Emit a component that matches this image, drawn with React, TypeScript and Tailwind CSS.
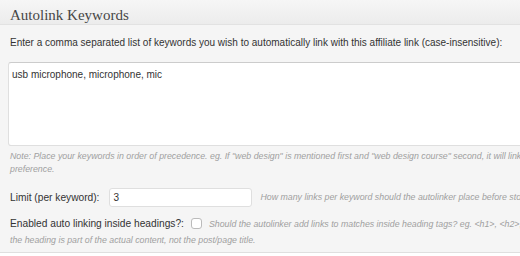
export default function App() {
  return (
    <div className="w-[520px] h-[256px] overflow-hidden bg-white font-['Liberation_Sans',Arial,sans-serif] text-[#333]">
      <div className="w-[640px] border-b border-[#dfdfdf] bg-[#f5f5f5]">
        {/* Header */}
        <div className="h-[25px] border-b border-[#e2e2e2] bg-gradient-to-b from-[#f6f6f6] to-[#ececec] px-[10px] pt-[4px]">
          <h3 className="font-['Liberation_Serif',serif] text-[15px] text-[#464646]">Autolink Keywords</h3>
        </div>

        <div className="px-[10px] pt-[11px] pb-[4px]">
          <p className="whitespace-nowrap text-[10px] leading-[14px]">
            Enter a comma separated list of keywords you wish to automatically link with this affiliate link (case-insensitive):
          </p>

          <textarea
            defaultValue="usb microphone, microphone, mic"
            className="mt-[12px] -ml-[2px] block h-[84px] w-full resize-none rounded-[3px] border border-[#dfdfdf] border-t-[#ccc] bg-white px-[3px] py-[5px] text-[10px] leading-[14px] text-[#333] outline-none"
          />

          <p className="mt-[4px] whitespace-nowrap text-[8.8px] italic leading-[13px] text-[#a0a0a0]">
            Note: Place your keywords in order of precedence. eg. If "web design" is mentioned first and "web design course" second, it will link "web design" with a higher
            <br />
            preference.
          </p>

          <div className="mt-[12px] flex items-center gap-[10px]">
            <span className="text-[10.2px]">Limit (per keyword):</span>
            <input
              defaultValue="3"
              className="h-[19px] w-[143px] rounded-[3px] border border-[#dfdfdf] bg-white px-[3px] text-[10px] outline-none"
            />
            <span className="-ml-[2px] whitespace-nowrap text-[8.8px] italic text-[#a0a0a0]">
              How many links per keyword should the autolinker place before stopping (0 for unlimited)
            </span>
          </div>

          <div className="mt-[9px] whitespace-nowrap text-[10.2px] leading-[16px]">
            <span>Enabled auto linking inside headings?:</span>
            <span className="mx-[7px] inline-block h-[11px] w-[11px] translate-y-[2px] rounded-[3px] border border-[#bbb] bg-white" />
            <span className="text-[8.8px] italic text-[#a0a0a0]">
              Should the autolinker add links to matches inside heading tags? eg. &lt;h1&gt;, &lt;h2&gt;, &lt;h3&gt; etc. Only enable this if
              <br />
              the heading is part of the actual content, not the post/page title.
            </span>
          </div>
        </div>
      </div>
    </div>
  );
}
